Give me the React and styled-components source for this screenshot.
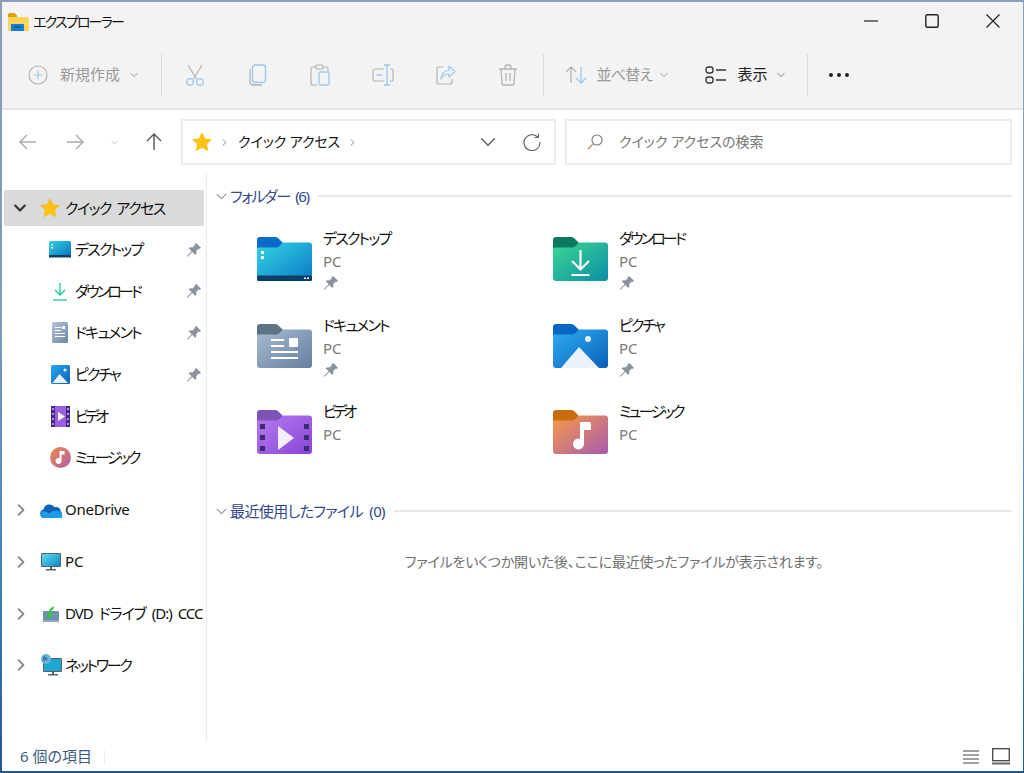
import React from 'react';
import styled, { createGlobalStyle } from 'styled-components';

const GlobalStyle = createGlobalStyle`
  html, body {
    margin: 0;
    padding: 0;
    width: 1024px;
    height: 773px;
    overflow: hidden;
    background: #fff;
  }
  body {
    font-family: "Noto Sans", "Noto Sans CJK JP", sans-serif;
    font-feature-settings: "palt";
  }
  svg { display: block; flex-shrink: 0; }
`;

const BLUE = '#9cc8ee';
const GRAY = '#b4b4b4';

// ---- icons ----

const Chevron = ({ size = 8, color = '#888', dir = 'down', sw = 1 }) => {
  const d = dir === 'down' ? 'M1 3l4 4 4-4' : 'M3 1l4 4-4 4';
  return (
    <svg width={size} height={size} viewBox="0 0 10 10" fill="none">
      <path d={d} stroke={color} strokeWidth={sw} strokeLinecap="round" strokeLinejoin="round" />
    </svg>
  );
};

const Star = ({ size = 20 }) => (
  <svg width={size} height={size} viewBox="0 0 20 20">
    <path d="M10 .8l2.9 6 6.5.8-4.8 4.5 1.3 6.6L10 15.4l-5.9 3.3 1.3-6.6L.6 7.6l6.5-.8z" fill="#ffc20e" stroke="#f3ae00" strokeWidth=".5" />
  </svg>
);

const Pin = ({ size = 16 }) => (
  <svg width={size} height={size} viewBox="0 0 16 16">
    <path d="M10.2 1l4.8 4.8-1.3 1.1-.9-.4-2.6 2.6c.5 1.4.2 2.9-.8 3.9L6.3 9.9 1.6 14.8.8 14.2l4.8-5L2.600 6.200c1-1 2.500-1.300 3.900-.8l2.600-2.600-.3-.9z" fill="#8b949e" />
  </svg>
);

const ExplorerIcon = () => (
  <svg width="21" height="20" viewBox="0 0 21 20">
    <path d="M0 2.500A1.500 1.500 0 0 1 1.500 1h5l2.500 2.500v3H0z" fill="#e0a100" />
    <path d="M0 5h19.500A1.500 1.500 0 0 1 21 6.500V19H0z" fill="#ffd45e" />
    <path d="M3 12h13v7H3z" fill="#0f7fd6" />
    <path d="M6 14.500h7v1.200H6z" fill="#0a4f90" />
  </svg>
);

const PlusIcon = () => (
  <svg width="20" height="20" viewBox="0 0 20 20" fill="none">
    <circle cx="10" cy="10" r="9" stroke={GRAY} strokeWidth="1.200" />
    <path d="M10 5.500v9M5.500 10h9" stroke={BLUE} strokeWidth="1.200" />
  </svg>
);

const CutIcon = () => (
  <svg width="20" height="22" viewBox="0 0 20 22" fill="none">
    <path d="M3 1l8.500 14M17 1L8.500 15" stroke={GRAY} strokeWidth="1.200" />
    <circle cx="5" cy="18" r="3.300" stroke={BLUE} strokeWidth="1.300" />
    <circle cx="15" cy="18" r="3.300" stroke={BLUE} strokeWidth="1.300" />
  </svg>
);

const CopyIcon = () => (
  <svg width="18" height="22" viewBox="0 0 18 22" fill="none">
    <path d="M1 5v13a3 3 0 0 0 3 3h9" stroke={GRAY} strokeWidth="1.300" />
    <rect x="3.500" y="1" width="13" height="17.500" rx="2.500" stroke={BLUE} strokeWidth="1.300" />
  </svg>
);

const PasteIcon = () => (
  <svg width="20" height="22" viewBox="0 0 20 22" fill="none">
    <path d="M6 3H3a2 2 0 0 0-2 2v14a2 2 0 0 0 2 2h4M13 3h3a2 2 0 0 1 2 2v2" stroke={GRAY} strokeWidth="1.200" />
    <rect x="6" y="1" width="7" height="4" rx="1" stroke={GRAY} strokeWidth="1.200" />
    <rect x="9" y="8" width="10" height="13" rx="1.500" stroke={BLUE} strokeWidth="1.300" />
  </svg>
);

const RenameIcon = () => (
  <svg width="22" height="22" viewBox="0 0 22 22" fill="none">
    <path d="M12 5H3a2 2 0 0 0-2 2v8a2 2 0 0 0 2 2h9M18 5h1.500A1.500 1.500 0 0 1 21 7v8a1.500 1.500 0 0 1-1.500 2H18" stroke={GRAY} strokeWidth="1.200" />
    <path d="M12 1h6M15 1v20M12 21h6M4.500 11h6" stroke={BLUE} strokeWidth="1.400" />
  </svg>
);

const ShareIcon = () => (
  <svg width="20" height="20" viewBox="0 0 20 20" fill="none">
    <path d="M7 2H3a2 2 0 0 0-2 2v13a2 2 0 0 0 2 2h11a2 2 0 0 0 2-2v-3" stroke={GRAY} strokeWidth="1.200" />
    <path d="M13 1l6 5.500-6 5.500V9c-4 0-6 1-8 5 0-5 3-8.500 8-8.500z" stroke={BLUE} strokeWidth="1.200" strokeLinejoin="round" />
  </svg>
);

const TrashIcon = () => (
  <svg width="20" height="22" viewBox="0 0 20 22" fill="none" stroke={GRAY} strokeWidth="1.300">
    <path d="M1 5h18M7 5V3a2 2 0 0 1 2-2h2a2 2 0 0 1 2 2v2M3 5l1 14a2 2 0 0 0 2 2h8a2 2 0 0 0 2-2l1-14M8 9v8M12 9v8" />
  </svg>
);

const SortIcon = () => (
  <svg width="22" height="18" viewBox="0 0 22 18" fill="none" strokeWidth="1.300">
    <path d="M6 17V1M1 6l5-5 5 5" stroke={GRAY} />
    <path d="M16 1v16M11 12l5 5 5-5" stroke={BLUE} />
  </svg>
);

const ViewIcon = () => (
  <svg width="22" height="18" viewBox="0 0 22 18" fill="none" stroke="#333" strokeWidth="1.300">
    <rect x="1" y="1" width="7" height="6" rx="2.500" />
    <rect x="1" y="11" width="7" height="6" rx="2.500" />
    <path d="M11 4h10M11 14h10" />
  </svg>
);

const ArrowIcon = ({ dir, color }) => {
  const d = {
    left: 'M17 9H1M8 2L1 9l7 7',
    right: 'M1 9h16M10 2l7 7-7 7',
    up: 'M9 17V1M2 8l7-7 7 7',
  }[dir];
  return (
    <svg width="18" height="18" viewBox="0 0 18 18" fill="none">
      <path d={d} stroke={color} strokeWidth="1.400" />
    </svg>
  );
};

const RefreshIcon = () => (
  <svg width="18" height="18" viewBox="0 0 18 18" fill="none" stroke="#666" strokeWidth="1.200">
    <path d="M14.700 4A8 8 0 1 0 17 9" />
    <path d="M15.500 .5v4h-4" />
  </svg>
);

const SearchIcon = () => (
  <svg width="16" height="16" viewBox="0 0 16 16" fill="none">
    <circle cx="10" cy="6" r="5" stroke="#777" strokeWidth="1.100" />
    <path d="M6.300 9.700L1 15" stroke="#b08a60" strokeWidth="1.200" />
  </svg>
);

const MinimizeIcon = () => (
  <svg width="14" height="14" viewBox="0 0 14 14"><path d="M0 7h14" stroke="#222" strokeWidth="1.200" /></svg>
);
const MaximizeIcon = () => (
  <svg width="14" height="14" viewBox="0 0 14 14" fill="none"><rect x=".8" y=".8" width="12.400" height="12.400" rx="1.500" stroke="#222" strokeWidth="1.400" /></svg>
);
const CloseIcon = () => (
  <svg width="14" height="14" viewBox="0 0 14 14"><path d="M.5 .5l13 13M13.500 .5l-13 13" stroke="#222" strokeWidth="1.200" /></svg>
);

const DetailsIcon = () => (
  <svg width="18" height="16" viewBox="0 0 18 16"><path d="M1 2h16M1 6h16M1 10h16M1 14h16" stroke="#444" strokeWidth="1.200" /></svg>
);
const TilesIcon = () => (
  <svg width="18" height="17" viewBox="0 0 18 17" fill="none">
    <rect x=".7" y=".7" width="16.600" height="12" stroke="#444" strokeWidth="1.300" />
    <path d="M0 15.500h18" stroke="#666" strokeWidth="2" />
  </svg>
);

// ---- small nav pane icons ----

const NavDesktop = () => (
  <svg width="22" height="17" viewBox="0 0 22 17">
    <defs><linearGradient id="nd" x1="0" y1="0" x2="1" y2="1"><stop offset="0" stopColor="#30d0e0" /><stop offset="1" stopColor="#0a72c4" /></linearGradient></defs>
    <rect x="0" y="0" width="22" height="16" rx="1.500" fill="url(#nd)" />
    <rect x="0" y="14" width="22" height="2.500" fill="#0b3f63" />
    <rect x="2" y="3" width="2" height="1.500" fill="#fff" />
    <rect x="2" y="6" width="2" height="1.500" fill="#fff" />
  </svg>
);
const NavDownload = () => (
  <svg width="16" height="19" viewBox="0 0 16 19" fill="none" stroke="#22c39b" strokeWidth="1.300">
    <path d="M8 1v12M3 8l5 5 5-5" />
    <path d="M1 18h14" />
  </svg>
);
const NavDocument = () => (
  <svg width="16" height="21" viewBox="0 0 16 21">
    <defs><linearGradient id="ndoc" x1="0" y1="0" x2="1" y2="1"><stop offset="0" stopColor="#b4c4d8" /><stop offset="1" stopColor="#6c86a4" /></linearGradient></defs>
    <rect width="16" height="21" rx="1.500" fill="url(#ndoc)" />
    <path d="M3 5h6v1H3zM3 8h6v1H3zM3 11h10v1H3zM3 14h10v1H3z" fill="#fff" />
    <rect x="10" y="4" width="3" height="3" fill="#fff" />
  </svg>
);
const NavPicture = () => (
  <svg width="19" height="19" viewBox="0 0 19 19">
    <defs><linearGradient id="npic" x1="0" y1="0" x2="1" y2="1"><stop offset="0" stopColor="#2aa5ee" /><stop offset="1" stopColor="#0a62bb" /></linearGradient></defs>
    <rect width="19" height="19" rx="1.500" fill="url(#npic)" />
    <circle cx="14" cy="5" r="1.500" fill="#fff" />
    <path d="M1.500 18l7-9 8.500 9z" fill="#e8f0fa" />
  </svg>
);
const NavVideo = () => (
  <svg width="19" height="21" viewBox="0 0 19 21">
    <rect width="19" height="21" rx="1.500" fill="#9a5ee0" />
    <path d="M0 0h4v21H0zM15 0h4v21h-4z" fill="#46287e" />
    <path d="M1 2h2v2H1zM1 7h2v2H1zM1 12h2v2H1zM1 17h2v2H1zM16 2h2v2h-2zM16 7h2v2h-2zM16 12h2v2h-2zM16 17h2v2h-2z" fill="#b98af0" />
    <path d="M7 6l7 4.500-7 4.500z" fill="#fff" />
  </svg>
);
const NavMusic = () => (
  <svg width="21" height="21" viewBox="0 0 21 21">
    <defs><linearGradient id="nmus" x1="0" y1="0" x2="1" y2="1"><stop offset="0" stopColor="#f08a4a" /><stop offset="1" stopColor="#b05ea8" /></linearGradient></defs>
    <circle cx="10.500" cy="10.500" r="10.500" fill="url(#nmus)" />
    <path d="M9.500 4h5v3.500h-3V14a3 3 0 1 1-2-2.800z" fill="#fff" />
  </svg>
);
const NavOneDrive = () => (
  <svg width="22" height="15" viewBox="0 0 22 15">
    <path d="M4.500 15A4.300 4.300 0 0 1 3.600 6.500 6 6 0 0 1 14.600 4.300 4.800 4.800 0 0 1 20.800 9.200 3 3 0 0 1 19 15z" fill="#0d62b8" />
    <path d="M4.500 15A4.300 4.300 0 0 1 1.500 8.500C4 8 7 9 9 10.500c3-3 8-4 11.800-1.300A3 3 0 0 1 19 15z" fill="#1c9be6" />
  </svg>
);
const NavPc = () => (
  <svg width="20" height="18" viewBox="0 0 20 18">
    <defs><linearGradient id="npc" x1="0" y1="0" x2="1" y2="1"><stop offset="0" stopColor="#5fdcec" /><stop offset="1" stopColor="#0f86c6" /></linearGradient></defs>
    <rect width="20" height="14" rx="1" fill="#58626c" />
    <rect x="1" y="1" width="18" height="12" fill="url(#npc)" />
    <path d="M9 14h2v2H9zM5 16h10v1.500H5z" fill="#58626c" />
  </svg>
);
const NavDvd = () => (
  <svg width="16" height="16" viewBox="0 0 16 16">
    <rect x="0" y="5" width="16" height="11" rx="1" fill="#6f8fb5" />
    <rect x="0" y="14" width="16" height="2" fill="#9aa5b2" />
    <path d="M11 0L10 4.500 8.500 4C7.500 6 7.500 7 7.500 7L10 7.500 6.500 12.500 2.500 8.500 5 8.200C5.500 5 7 2.500 8 2z" fill="#3ac43e" />
  </svg>
);
const NavNetwork = () => (
  <svg width="22" height="22" viewBox="0 0 22 22">
    <rect x="3" y="4" width="19" height="14" rx="1" fill="#56616b" />
    <rect x="4" y="5" width="17" height="12" fill="#1da6d0" />
    <path d="M12 18h2v2h-2zM8 20h10v1.500H8z" fill="#56616b" />
    <circle cx="6" cy="5" r="5" fill="#6cb0d8" />
    <path d="M3 2.500c2-1 3 .5 4 1s1 3-1 3-2 1.500-3 0z" fill="#3e7fae" />
  </svg>
);

// ---- folders ----

const FOLDERS = {
  desktop: {
    tab: '#0a6cc8', from: '#34d6e2', to: '#0b78c8',
    art: (
      <>
        <rect x="0" y="38.500" width="55" height="5.500" rx="1.500" fill="#0a3f66" />
        <path d="M4 14h3v3H4zM4 19h3v3H4z" fill="#fff" />
        <path d="M47 40.500h2v1.500h-2zM50 40.500h2v1.500h-2z" fill="#fff" />
      </>
    ),
  },
  download: {
    tab: '#0b7a5e', from: '#3bd893', to: '#0c8ea6',
    art: <path d="M27.500 13v19M19 24l8.500 8.500L36 24M18.500 38h18" stroke="#fff" strokeWidth="2.200" fill="none" />,
  },
  document: {
    tab: '#5d7485', from: '#a9bbd3', to: '#647f9e',
    art: (
      <>
        <path d="M14 15h13v2H14zM14 21h13v2H14zM14 27h27v2H14zM14 33h27v2H14z" fill="#fff" />
        <rect x="32" y="14" width="9" height="9" rx="1" fill="#fff" />
      </>
    ),
  },
  picture: {
    tab: '#0966c2', from: '#2eaef2', to: '#0a5fb8',
    art: (
      <>
        <circle cx="35" cy="15" r="3" fill="#e6f0fa" />
        <path d="M8 44l18-21 20 21z" fill="#e9f1fb" />
      </>
    ),
  },
  video: {
    tab: '#7d55b4', from: '#b57cf0', to: '#8a44d8',
    art: (
      <>
        <path d="M3 14h5v5H3zM3 25h5v5H3zM3 36h5v5H3zM47 14h5v5h-5zM47 25h5v5h-5zM47 36h5v5h-5z" fill="#3f2a70" />
        <path d="M21 16l16 12-16 12z" fill="#f4eefc" />
      </>
    ),
  },
  music: {
    tab: '#c96d0c', from: '#f99a45', to: '#a75bb0',
    art: <path d="M27 12h9a2 2 0 0 1 2 2v5a1 1 0 0 1-1 1h-6v14a5.500 5.500 0 1 1-4-5.300z" fill="#fff" />,
  },
};

const FolderIcon = ({ kind }) => {
  const f = FOLDERS[kind];
  const id = `fold-${kind}`;
  return (
    <svg width="55" height="44" viewBox="0 0 55 44">
      <defs>
        <linearGradient id={id} x1="0" y1="0" x2="1" y2="1">
          <stop offset="0" stopColor={f.from} />
          <stop offset="1" stopColor={f.to} />
        </linearGradient>
      </defs>
      <path d="M0 3a3 3 0 0 1 3-3h15c1.500 0 2.500.6 3.500 1.500L27 7v6H0z" fill={f.tab} />
      <path d="M0 10.500h19c1.500 0 2.500-.6 3.500-1.500L26 5.500h26a3 3 0 0 1 3 3V41a3 3 0 0 1-3 3H3a3 3 0 0 1-3-3z" fill={`url(#${id})`} />
      {f.art}
    </svg>
  );
};

// ---- layout ----

const Desktop = styled.div`
  width: 1024px;
  height: 773px;
  box-sizing: border-box;
  padding: 2px 1px 2px 2px;
  background: linear-gradient(180deg, #8ba0b6 0%, #7f9dbb 40%, #3f7fbe 75%, #23578f 100%);
`;

const Window = styled.div`
  height: 100%;
  display: flex;
  flex-direction: column;
  background: #fff;
`;

const TitleBar = styled.div`
  height: 39px;
  display: flex;
  align-items: center;
  background: #f3f3f3;
  padding-left: 6px;
`;

const TitleText = styled.span`
  flex: 1;
  margin-left: 4px;
  padding-bottom: 2px;
  font-size: 14px;
  letter-spacing: -1.8px;
  color: #111;
`;

const WinButton = styled.div`
  width: 61px;
  height: 37px;
  padding-bottom: 2px;
  display: flex;
  align-items: center;
  justify-content: center;
`;

const Toolbar = styled.div`
  height: 69px;
  box-sizing: border-box;
  display: flex;
  align-items: center;
  background: #f3f3f3;
  border-bottom: 2px solid #e4e4e4;
  padding: 0 0 0 26px;
`;

const Sep = styled.div`
  width: 1px;
  height: 42px;
  background: #dcdcdc;
  margin: ${p => p.$margin || '0'};
`;

const ToolButton = styled.div`
  display: flex;
  align-items: center;
  gap: ${p => p.$gap || 12}px;
  font-size: 15px;
  letter-spacing: ${p => p.$ls || 0}px;
  color: ${p => (p.$active ? '#222' : '#9a9a9a')};
  width: ${p => p.$width || 'auto'};

  span {
    padding-bottom: 2px;
  }
`;

const ToolChevron = styled.div`
  margin-left: -2px;
`;

const IconButton = styled.div`
  width: 62.6px;
  display: flex;
  justify-content: center;
`;

const Dots = styled.div`
  display: flex;
  gap: 4px;
  margin-left: 21px;
  span {
    width: 4px;
    height: 4px;
    border-radius: 50%;
    background: #222;
  }
`;

const AddressRow = styled.div`
  height: 64px;
  box-sizing: border-box;
  display: flex;
  align-items: center;
  padding: 0 11px 0 17px;
`;

const NavArrow = styled.div`
  width: 18px;
  margin-right: ${p => p.$mr}px;
`;

const InputBox = styled.div`
  height: 46px;
  box-sizing: border-box;
  border: 2px solid #ececec;
  display: flex;
  align-items: center;
  font-size: 14px;

  span {
    padding-bottom: 2px;
  }
`;

const AddressBox = styled(InputBox)`
  width: 375px;
  padding-left: 9px;
  color: #111;
  letter-spacing: -0.1px;
`;

const SearchBox = styled(InputBox)`
  width: 447px;
  margin-left: 9px;
  padding-left: 20px;
  color: #777;
  gap: 16px;
`;

const Crumb = styled.div`
  margin: 0 10px 0 9px;
`;

const Spring = styled.div`
  flex: 1;
`;

const ChevBox = styled.div`
  margin-left: ${p => p.$ml || 0}px;
  margin-right: ${p => p.$mr || 0}px;
`;

const Body = styled.div`
  flex: 1;
  display: flex;
  min-height: 0;
`;

const Sidebar = styled.div`
  width: 204px;
  padding-top: 13px;
  border-right: 1px solid #eaeaea;
  overflow: hidden;
  flex-shrink: 0;
`;

const Label = styled.span`
  display: inline-block;
  padding-bottom: 2px;
  font-size: 15px;
  letter-spacing: ${p => p.$ls || 0}px;
  word-spacing: 3px;
  white-space: nowrap;
`;

const NavRow = styled.div`
  height: 41.6px;
  display: flex;
  align-items: center;
  padding-left: 47px;
  padding-right: 4px;
  color: #111;
`;

const NavIconSlot = styled.div`
  width: 22px;
  margin-right: 4px;
  display: flex;
  justify-content: center;
`;

const NavLabel = styled(Label)`
  flex: 1;
`;

const QuickRow = styled.div`
  height: 36px;
  margin: 3px 0 3px 2px;
  width: 200px;
  display: flex;
  align-items: center;
  padding-left: 10px;
  box-sizing: border-box;
  background: #dadada;
  border-radius: 2px;
  color: #111;
`;

const RootGroup = styled.div`
  margin-top: 6px;
`;

const RootRow = styled.div`
  height: 51.7px;
  display: flex;
  align-items: center;
  padding-left: 13px;
  color: #111;
`;

const RootIconSlot = styled.div`
  width: 22px;
  margin: 0 3px 0 13px;
  display: flex;
  justify-content: center;
  flex-shrink: 0;
`;

const Main = styled.div`
  flex: 1;
  padding: 10px 11px 0 9px;
  min-width: 0;
`;

const SectionHead = styled.div`
  display: flex;
  align-items: center;
  gap: 3px;
  height: 24px;
  color: #34478c;
`;

const SectionLine = styled.div`
  flex: 1;
  height: 2px;
  background: #e8e8e8;
  margin-left: 6px;
`;

const TileGrid = styled.div`
  display: grid;
  grid-template-columns: 296px 296px;
  grid-auto-rows: 86.5px;
  padding: 18px 0 0 41px;
  height: 244px;
`;

const Tile = styled.div`
  display: flex;
  gap: 11px;
`;

const TileIcon = styled.div`
  padding-top: 11px;
`;

const TileText = styled.div`
  color: #111;
  display: flex;
  flex-direction: column;
`;

const TileName = styled.div`
  height: 24px;
  line-height: 24px;
`;

const TileSub = styled.div`
  height: 22px;
  line-height: 22px;
  font-size: 15px;
  color: #7a7a7a;
`;

const TilePin = styled.div`
  padding-top: 3px;
`;

const EmptyNote = styled.div`
  text-align: center;
  font-size: 14px;
  letter-spacing: -0.18px;
  color: #707070;
  margin-top: 28px;
`;

const RecentHead = styled(SectionHead)`
  margin-top: 29px;
`;

const StatusBar = styled.div`
  height: 29px;
  display: flex;
  align-items: center;
  padding: 0 13px 0 18px;
  font-size: 15px;
  color: #3c5a80;

  span {
    padding-bottom: 2px;
  }
`;

const StatusSep = styled.div`
  width: 1px;
  height: 14px;
  background: #eee;
  margin-left: 12px;
`;

const ViewToggle = styled.div`
  display: flex;
  align-items: center;
  gap: 12px;
`;

const navItems = [
  { label: 'デスクトップ', icon: <NavDesktop />, pinned: true, ls: -1.8 },
  { label: 'ダウンロード', icon: <NavDownload />, pinned: true, ls: -2.8 },
  { label: 'ドキュメント', icon: <NavDocument />, pinned: true, ls: -1.8 },
  { label: 'ピクチャ', icon: <NavPicture />, pinned: true, ls: -2.1 },
  { label: 'ビデオ', icon: <NavVideo />, ls: -3.6 },
  { label: 'ミュージック', icon: <NavMusic />, ls: -2.6 },
];

const roots = [
  { label: 'OneDrive', icon: <NavOneDrive />, ls: -0.25 },
  { label: 'PC', icon: <NavPc /> },
  { label: 'DVD ドライブ (D:) CCC', icon: <NavDvd />, ls: -1 },
  { label: 'ネットワーク', icon: <NavNetwork />, ls: -2.3 },
];

const tiles = [
  { name: 'デスクトップ', kind: 'desktop', pinned: true, ls: -1.8 },
  { name: 'ダウンロード', kind: 'download', pinned: true, ls: -2.8 },
  { name: 'ドキュメント', kind: 'document', pinned: true, ls: -1.8 },
  { name: 'ピクチャ', kind: 'picture', pinned: true, ls: -2.1 },
  { name: 'ビデオ', kind: 'video', ls: -3.6 },
  { name: 'ミュージック', kind: 'music', ls: -2.6 },
];

const App = () => {
  return (
    <Desktop>
      <GlobalStyle />
      <Window>
        <TitleBar>
          <ExplorerIcon />
          <TitleText>エクスプローラー</TitleText>
          <WinButton><MinimizeIcon /></WinButton>
          <WinButton><MaximizeIcon /></WinButton>
          <WinButton><CloseIcon /></WinButton>
        </TitleBar>

        <Toolbar>
          <ToolButton $width="133px">
            <PlusIcon />
            <span>新規作成</span>
            <ToolChevron><Chevron color="#888" /></ToolChevron>
          </ToolButton>
          <Sep $margin="0 2px 0 0" />
          <IconButton><CutIcon /></IconButton>
          <IconButton><CopyIcon /></IconButton>
          <IconButton><PasteIcon /></IconButton>
          <IconButton><RenameIcon /></IconButton>
          <IconButton><ShareIcon /></IconButton>
          <IconButton><TrashIcon /></IconButton>
          <Sep $margin="0 21px 0 3px" />
          <ToolButton $width="140px" $gap={10} $ls={-0.8}>
            <SortIcon />
            <span>並べ替え</span>
            <ToolChevron><Chevron color="#888" /></ToolChevron>
          </ToolButton>
          <ToolButton $width="102px" $active $gap={11}>
            <ViewIcon />
            <span>表示</span>
            <ToolChevron><Chevron color="#666" /></ToolChevron>
          </ToolButton>
          <Sep />
          <Dots><span /><span /><span /></Dots>
        </Toolbar>

        <AddressRow>
          <NavArrow $mr={29}><ArrowIcon dir="left" color="#aaa" /></NavArrow>
          <NavArrow $mr={0}><ArrowIcon dir="right" color="#aaa" /></NavArrow>
          <ChevBox $ml={27} $mr={27}><Chevron size={7} color="#aaa" /></ChevBox>
          <NavArrow $mr={18}><ArrowIcon dir="up" color="#555" /></NavArrow>
          <AddressBox>
            <Star />
            <Crumb><Chevron size={7} dir="right" color="#555" /></Crumb>
            <span>クイック アクセス</span>
            <Crumb><Chevron size={7} dir="right" color="#555" /></Crumb>
            <Spring />
            <ChevBox $mr={27}><Chevron size={16} color="#666" /></ChevBox>
            <ChevBox $mr={13}><RefreshIcon /></ChevBox>
          </AddressBox>
          <SearchBox>
            <SearchIcon />
            <span>クイック アクセスの検索</span>
          </SearchBox>
        </AddressRow>

        <Body>
          <Sidebar>
            <QuickRow>
              <ChevBox $mr={14}><Chevron size={12} color="#333" sw={1.800} /></ChevBox>
              <ChevBox $mr={5}><Star /></ChevBox>
              <Label $ls={-1.5}>クイック アクセス</Label>
            </QuickRow>
            {navItems.map(item => (
              <NavRow key={item.label}>
                <NavIconSlot>{item.icon}</NavIconSlot>
                <NavLabel $ls={item.ls}>{item.label}</NavLabel>
                {item.pinned && <Pin />}
              </NavRow>
            ))}
            <RootGroup>
              {roots.map(item => (
                <RootRow key={item.label}>
                  <Chevron size={12} dir="right" color="#888" sw={1.500} />
                  <RootIconSlot>{item.icon}</RootIconSlot>
                  <Label $ls={item.ls}>{item.label}</Label>
                </RootRow>
              ))}
            </RootGroup>
          </Sidebar>

          <Main>
            <SectionHead>
              <Chevron size={11} color="#8a94a8" />
              <Label $ls={-1.4}>フォルダー (6)</Label>
              <SectionLine />
            </SectionHead>
            <TileGrid>
              {tiles.map(t => (
                <Tile key={t.kind}>
                  <TileIcon><FolderIcon kind={t.kind} /></TileIcon>
                  <TileText>
                    <TileName><Label $ls={t.ls}>{t.name}</Label></TileName>
                    <TileSub>PC</TileSub>
                    {t.pinned && <TilePin><Pin /></TilePin>}
                  </TileText>
                </Tile>
              ))}
            </TileGrid>
            <RecentHead>
              <Chevron size={11} color="#8a94a8" />
              <Label $ls={-0.6}>最近使用したファイル (0)</Label>
              <SectionLine />
            </RecentHead>
            <EmptyNote>ファイルをいくつか開いた後、ここに最近使ったファイルが表示されます。</EmptyNote>
          </Main>
        </Body>

        <StatusBar>
          <span>6 個の項目</span>
          <StatusSep />
          <Spring />
          <ViewToggle>
            <DetailsIcon />
            <TilesIcon />
          </ViewToggle>
        </StatusBar>
      </Window>
    </Desktop>
  );
};

export default App;
